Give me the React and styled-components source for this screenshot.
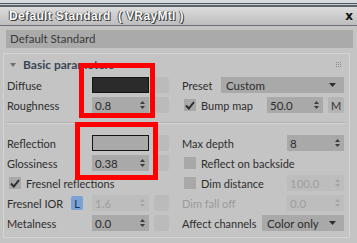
import React from "react";
import styled, { createGlobalStyle } from "styled-components";

const Global = createGlobalStyle`
  html, body { margin: 0; padding: 0; background: #c4c4c4; }
  body { font-family: Lato, "Liberation Sans", sans-serif; font-size: 11px; color: #2c2c2c; }
  * { box-sizing: border-box; }
`;

const Window = styled.div`
  position: relative;
  width: 357px;
  height: 243px;
  overflow: hidden;
  background: #c4c4c4;
  display: flex;
  flex-direction: column;
`;

const TopStrip = styled.div`
  flex: none;
  height: 7px;
  background: linear-gradient(
    to bottom,
    #d8dbde 0 3px,
    #4f575f 3px 4px,
    #c9cdd1 4px 5px,
    #5b636b 5px 7px
  );
`;

const TitleBar = styled.div`
  flex: none;
  height: 19px;
  display: flex;
  align-items: center;
  justify-content: space-between;
  padding: 0 4px 0 9px;
  background: linear-gradient(#dddddd, #bdbdbd);
  border-bottom: 1px solid #6c7278;
`;

const Title = styled.span`
  font-family: "Liberation Sans", Arial, sans-serif;
  font-weight: 700;
  font-size: 12px;
  letter-spacing: 0.35px;
  color: #fbfbfb;
  white-space: pre;
  text-shadow: 1px 1px 0 #3a3a3a, 0 0 1px #222, -1px 0 0 #6a6a6a;
`;

const Close = styled.span`
  font-weight: 700;
  font-size: 12px;
  color: #111;
  font-family: "DejaVu Sans", sans-serif;
`;

const NameField = styled.div`
  flex: none;
  margin: 4px 4px 0 6px;
  height: 18px;
  line-height: 18px;
  padding-left: 4px;
  background: #aaaaaa;
  color: #3a3a3a;
  font-size: 11.5px;
`;

const Rollout = styled.div`
  flex: none;
  margin: 5px 7px 0 3px;
  border: 1px solid #d4d4d4;
  padding: 0 4px 4px 3px;
`;

const RolloutHeader = styled.div`
  height: 21px;
  display: flex;
  align-items: center;
  padding-left: 3px;
`;

const HeaderText = styled.span`
  margin-left: 7px;
  font-weight: 700;
  font-size: 12px;
  color: #3b4654;
`;

const GripBox = styled.span`
  margin-left: auto;
  margin-right: 3px;
  display: flex;
`;

const Row = styled.div`
  display: grid;
  grid-template-columns: 162px 163px;
  column-gap: 12px;
  height: 20px;
  align-items: center;
`;

const Cell = styled.div`
  display: flex;
  align-items: center;
  height: 20px;
`;

const Label = styled.span`
  width: ${(p) => (p.$w ? `${p.$w}px` : "auto")};
  flex: none;
  display: flex;
  align-items: center;
  padding-left: ${(p) => p.$pl || 0}px;
  color: ${(p) => (p.$disabled ? "#9b9b9b" : "#2e2e2e")};
  white-space: nowrap;
`;

const Swatch = styled.div`
  width: 57px;
  height: 16px;
  border: 1px solid #141414;
  background: ${(p) => p.$color};
`;

const SpinnerBox = styled.div`
  width: ${(p) => p.$w}px;
  height: 16px;
  display: flex;
  align-items: center;
  justify-content: space-between;
  padding: 0 4px 0 3px;
  margin-left: ${(p) => p.$ml || "0"};
  background: ${(p) => (p.$disabled ? "#bdbdbd" : "#a9a9a9")};
  color: ${(p) => (p.$disabled ? "#9e9e9e" : "#2c2c2c")};
  font-size: 11.5px;
`;

const MapButton = styled.div`
  width: 15px;
  height: 16px;
  margin-left: 5px;
  border-radius: 3px;
  background: #bbbbbb;
`;

const MButton = styled.div`
  width: 16px;
  height: 16px;
  margin-left: 5px;
  border-radius: 2px;
  background: #b4b4b4;
  color: #333;
  display: flex;
  align-items: center;
  justify-content: center;
  font-size: 11px;
`;

const LButton = styled.div`
  width: 12px;
  height: 14px;
  margin-left: auto;
  margin-right: 9px;
  border-radius: 2px;
  background: #79a1d4;
  color: #1d3150;
  display: flex;
  align-items: center;
  justify-content: center;
  font-size: 11px;
`;

const Dropdown = styled.div`
  width: ${(p) => p.$w}px;
  height: 16px;
  margin-left: auto;
  display: flex;
  align-items: center;
  justify-content: space-between;
  padding: 0 8px 0 5px;
  background: #a9a9a9;
  color: #2c2c2c;
  font-size: 11.5px;
`;

const CheckBox = styled.div`
  width: 12px;
  height: 12px;
  flex: none;
  margin-left: ${(p) => p.$ml || 0}px;
  margin-right: 5px;
  background: #a8a8a8;
  display: flex;
  align-items: center;
  justify-content: center;
`;

const Separator = styled.div`
  margin: 7px 0 9px;
  border-top: 1px solid #b1b1b1;
  border-bottom: 1px solid #d6d6d6;
`;

const Highlight = styled.div`
  position: absolute;
  left: ${(p) => p.$x}px;
  top: ${(p) => p.$y}px;
  width: ${(p) => p.$w}px;
  height: ${(p) => p.$h}px;
  border: 5px solid #ff0000;
  pointer-events: none;
`;

const Arrows = ({ disabled }) => (
  <svg width="5" height="8" viewBox="0 0 5 8">
    <path d="M2.5 0 L5 3 H0 Z M0 5 H5 L2.5 8 Z" fill={disabled ? "#a4a4a4" : "#3c3c3c"} />
  </svg>
);

const Spinner = ({ value, w = 57, disabled, ml }) => (
  <SpinnerBox $w={w} $disabled={disabled} $ml={ml}>
    <span>{value}</span>
    <Arrows disabled={disabled} />
  </SpinnerBox>
);

const Select = ({ value, w }) => (
  <Dropdown $w={w}>
    <span>{value}</span>
    <svg width="7" height="4" viewBox="0 0 7 4">
      <path d="M0 0 H7 L3.5 4 Z" fill="#2e2e2e" />
    </svg>
  </Dropdown>
);

const Check = ({ checked, ml }) => (
  <CheckBox $ml={ml}>
    {checked && (
      <svg width="10" height="9" viewBox="0 0 10 9">
        <path d="M1 4.5 L3.8 7.5 L9 1" stroke="#2b2b2b" strokeWidth="2" fill="none" />
      </svg>
    )}
  </CheckBox>
);

const Grip = () => (
  <svg width="6" height="6" viewBox="0 0 6 6">
    {[0, 2, 4].map((y) =>
      [0, 2, 4].map((x) => <rect key={`${x}-${y}`} x={x} y={y} width="1" height="1" fill="#8b8b8b" />)
    )}
  </svg>
);

const Caret = () => (
  <svg width="6" height="4" viewBox="0 0 6 4">
    <path d="M0 0 H6 L3 4 Z" fill="#707070" />
  </svg>
);

export default function App() {
  return (
    <Window>
      <Global />
      <TopStrip />
      <TitleBar>
        <Title>Default Standard  ( VRayMtl )</Title>
        <Close>x</Close>
      </TitleBar>
      <NameField>Default Standard</NameField>
      <Rollout>
        <RolloutHeader>
          <Caret />
          <HeaderText>Basic parameters</HeaderText>
          <GripBox>
            <Grip />
          </GripBox>
        </RolloutHeader>

        <Row>
          <Cell>
            <Label $w={85}>Diffuse</Label>
            <Swatch $color="#2b2b2b" />
            <MapButton />
          </Cell>
          <Cell>
            <Label $pl={1}>Preset</Label>
            <Select value="Custom" w={123} />
          </Cell>
        </Row>
        <Row>
          <Cell>
            <Label $w={85}>Roughness</Label>
            <Spinner value="0.8" />
            <MapButton />
          </Cell>
          <Cell>
            <Check checked ml={3} />
            <Label>Bump map</Label>
            <Spinner value="50.0" w={56} ml="auto" />
            <MButton>M</MButton>
          </Cell>
        </Row>

        <Separator />

        <Row>
          <Cell>
            <Label $w={85}>Reflection</Label>
            <Swatch $color="#a9a9a9" />
            <MapButton />
          </Cell>
          <Cell>
            <Label $pl={1}>Max depth</Label>
            <Spinner value="8" ml="auto" />
          </Cell>
        </Row>
        <Row>
          <Cell>
            <Label $w={85}>Glossiness</Label>
            <Spinner value="0.38" />
            <MapButton />
          </Cell>
          <Cell>
            <Check ml={3} />
            <Label>Reflect on backside</Label>
          </Cell>
        </Row>
        <Row>
          <Cell>
            <Check checked ml={2} />
            <Label>Fresnel reflections</Label>
          </Cell>
          <Cell>
            <Check ml={3} />
            <Label>Dim distance</Label>
            <Spinner value="100.0" disabled ml="auto" />
          </Cell>
        </Row>
        <Row>
          <Cell>
            <Label $w={85}>
              Fresnel IOR
              <LButton>L</LButton>
            </Label>
            <Spinner value="1.6" disabled />
            <MapButton />
          </Cell>
          <Cell>
            <Label $pl={1} $disabled>
              Dim fall off
            </Label>
            <Spinner value="0.0" disabled ml="auto" />
          </Cell>
        </Row>
        <Row>
          <Cell>
            <Label $w={85}>Metalness</Label>
            <Spinner value="0.0" />
            <MapButton />
          </Cell>
          <Cell>
            <Label $pl={1}>Affect channels</Label>
            <Select value="Color only" w={82} />
          </Cell>
        </Row>
      </Rollout>

      <Highlight $x={79} $y={63} $w={76} $h={55} />
      <Highlight $x={75} $y={122} $w={83} $h={58} />
    </Window>
  );
}
